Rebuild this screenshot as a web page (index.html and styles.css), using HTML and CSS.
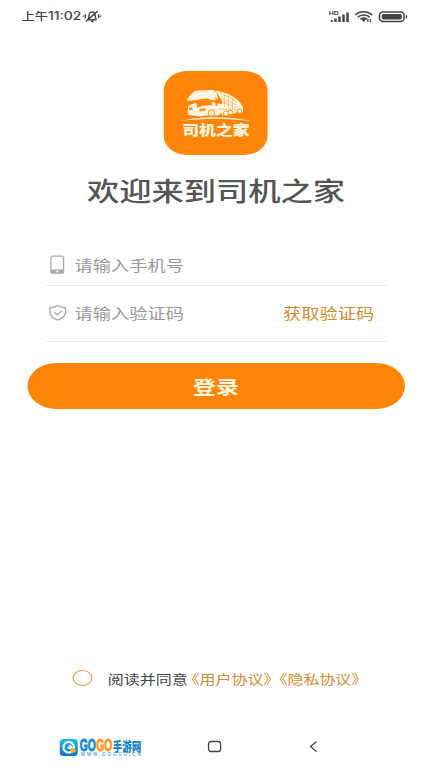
FILE: index.html
```html
<!DOCTYPE html>
<html lang="zh-CN">
<head>
<meta charset="utf-8">
<title>司机之家</title>
<link rel="stylesheet" href="styles.css">
</head>
<body>
<div class="screen">
  <header class="status">
    <span class="cn">上午</span><span class="clock">11:02</span>
    <svg class="mute" viewBox="0 0 20 14" preserveAspectRatio="none" fill="none" stroke="#444" stroke-width="1.5">
      <path d="M5 10.500h10M6 10c1.200-2 .4-4.500 1.500-6.500C8.600 1.700 12 1.700 13 4c.7 2 .2 4.500 1.500 6M9 12.400h2.500M3.500 12.500 16 1.200M3 4.500v4M1 5.800v1.500M17 4.500v4M19 5.800v1.500"/>
    </svg>
    <svg class="signals" viewBox="0 0 80 14" preserveAspectRatio="none">
      <text x="0" y="5.500" class="hd" textLength="10" lengthAdjust="spacingAndGlyphs">HD</text>
      <g fill="#444">
        <path d="M2 11h2v2H2zM5.500 9.500h2.500V13H5.500zM9.500 7.500h2.500V13H9.500zM13.500 5.500h2.500V13h-2.500zM17.500 3.500h2.500V13h-2.500z"/>
        <path d="M32.500 10.500 35 9l2.500 1.500L35 13z"/>
        <path d="M38.500 10h1.200v3h-1.200zM41 10h1.200v3H41z"/>
        <rect x="53" y="5" width="20" height="5.500" rx="1.500"/>
        <rect x="77" y="6" width="1.500" height="3.500" rx=".7"/>
      </g>
      <g fill="none" stroke="#444" stroke-width="1.500">
        <path d="M26.500 6c5-4.300 12-4.300 17 0M29 8.200c3.500-3 8.500-3 12 0M31.500 10.200c2-1.700 5-1.700 7 0"/>
        <rect x="50.700" y="2.900" width="24.600" height="9.600" rx="3.500"/>
      </g>
    </svg>
  </header>

  <main>
    <div class="logo">
      <svg class="truck" viewBox="0 0 76 36" preserveAspectRatio="none">
        <g fill="#fff5df">
          <path d="M9 14.500C12.500 9 15 5 21 4.500L36 4l3 2.500 1.500 6.500-4 1.500c-5-2-10-2.500-15-1L16 14.500z"/>
          <path d="m38 4.500 13 3.500 9 5.500 5.500 7V26l-3 1.500-2-2.500-4 3-3-1-4 3-5-1V15z"/>
          <path d="M11 19.500 18 17c6-2 13-2 19-.5l8 2v8l-5 3H27l-3 1-13-1.500-1-4z"/>
        </g>
        <g fill="#ff8508">
          <path d="m19 16 4-1.500 11 .7.500 3.800-9 .8-6 2z"/>
          <path d="m11.500 22 3-.8 1 2.300-4 .8zM22 23.500l6-1.500v2.300l-6 1.200zM38 10l1.500 4 .5 6-2-.5z"/>
        </g>
        <path fill="none" stroke="#ff8508" stroke-opacity=".7" stroke-width=".6" d="m43 8 9 3 7 5M44 12l15 7M45 16l14 6M47 8v13M51 9.500v13M55 12v11M41 23l20 1"/>
        <g fill="#fff5df" stroke="#ff8508" stroke-width=".9"><circle cx="34" cy="27" r="3.200"/><circle cx="48.500" cy="27.500" r="2.600"/><circle cx="53" cy="26.500" r="2.400"/><circle cx="62" cy="25.200" r="2.200"/></g>
        <path fill="#fff5df" d="M3 35C21 30.300 52 29.500 75 35.500 53 31.500 23 32 3 35"/>
      </svg>
      <span class="brand">司机之家</span>
    </div>
    <h1>欢迎来到司机之家</h1>

    <form>
      <div class="field phone">
        <svg class="icon" viewBox="0 0 18 20" preserveAspectRatio="none"><rect x="2.200" y="1.200" width="12.600" height="17" rx="1.600" fill="none" stroke="#aaa" stroke-width="1.300"/><path fill="#aaa" d="M2 14.500h13V18H2z"/><ellipse cx="8.500" cy="16.400" rx="1.200" ry=".9" fill="#fff"/></svg>
        <span class="hint">请输入手机号</span>
      </div>
      <div class="field code">
        <svg class="icon" viewBox="0 0 18 20" preserveAspectRatio="none" fill="none" stroke="#aaa" stroke-width="1.400"><path d="M9 2.700C6.500 4.300 4 4.700 1.200 4.700V9c0 4 3.500 6.500 7.800 8 4.300-1.500 7.800-4 7.800-8V4.700C14 4.700 11.500 4.300 9 2.700z"/><path d="m5.500 9 3 2.700 4.500-4"/></svg>
        <span class="hint">请输入验证码</span>
        <span class="get">获取验证码</span>
      </div>
      <div class="login">登录</div>
    </form>
  </main>

  <div class="agree">
    <span class="radio"></span>
    <span>阅读并同意</span><span class="link"><i class="open">《</i>用户协议<i class="close">》</i><i class="open">《</i>隐私协议<i class="close">》</i></span>
  </div>

  <footer class="nav">
    <svg class="mark" viewBox="0 0 84 22" preserveAspectRatio="none">
      <defs><linearGradient id="b" x2="0" y2="1"><stop stop-color="#25b6f4"/><stop offset="1" stop-color="#0878c4"/></linearGradient></defs>
      <rect x="1" y="3" width="18" height="17" rx="3.500" fill="url(#b)"/>
      <circle cx="10" cy="11.200" r="5.300" fill="none" stroke="#fff" stroke-width="2"/>
      <path d="M14 11.500H9.500a1.500 1.500 0 1 0 1-2" fill="none" stroke="#fff" stroke-width="1.500"/>
      <path d="m11 13 5-1 1 3.500-4 2z" fill="#ffac28"/>
      <text class="gogo" x="21" y="15.300" fill="#138bd0" stroke="#138bd0" textLength="16" lengthAdjust="spacingAndGlyphs">GO</text>
      <text class="gogo" x="37.500" y="15.300" fill="#ff9816" stroke="#ff9816" textLength="16" lengthAdjust="spacingAndGlyphs">GO</text>
      <text class="game" x="54" y="14.500" textLength="28.500" lengthAdjust="spacingAndGlyphs">手游网</text>
      <text class="url" x="22" y="20.500" textLength="60">WWW.GOGGO.CN</text>
    </svg>
    <svg class="home" viewBox="0 0 16 14" preserveAspectRatio="none"><rect x="2.300" y="1.500" width="12" height="10" rx="2.300" fill="none" stroke="#444" stroke-width="1.300"/></svg>
    <svg class="back" viewBox="0 0 12 14" preserveAspectRatio="none"><path d="M9 1.500 3 6.500 9 11.500" fill="none" stroke="#444" stroke-width="1.300"/></svg>
  </footer>
</div>
</body>
</html>
```
FILE: styles.css
```css
* { box-sizing: border-box; }
body {
  margin: 0;
  background: #fff;
  font-family: "Noto Sans CJK SC", sans-serif;
  overflow: hidden;
}
/* The layout is drawn at 4/5 width and widened to fill the window. */
.screen {
  width: 345.6px;
  height: 768px;
  display: flex;
  flex-direction: column;
  transform: scaleX(1.25);
  transform-origin: 0 0;
}
svg { display: block; flex: none; overflow: visible; }
span { white-space: nowrap; }

.status {
  height: 32px;
  padding-left: 17.2px;
  display: flex;
  align-items: center;
  color: #444;
  font-size: 10.6px;
  line-height: 32px;
}
.cn { font-weight: 500; }
.clock {
  width: 26px;
  font-family: Inter, sans-serif;
  font-size: 11.2px;
  font-weight: 500;
}
.mute { width: 15.2px; height: 13px; margin-left: 2px; }
.signals { width: 64px; height: 14px; margin-left: 181.5px; }
.hd { font: bold 6px "Liberation Sans", sans-serif; fill: #444; }

main { padding-top: 39px; }
.logo {
  width: 83.2px;
  height: 83.5px;
  margin-left: 131.2px;
  padding-top: 15px;
  border-radius: 19px;
  background: #ff8508;
  display: flex;
  flex-direction: column;
  align-items: center;
}
.truck { width: 60.8px; height: 36px; }
.brand {
  color: #fff5df;
  font-size: 13.5px;
  font-weight: 900;
  line-height: 15px;
}
h1 {
  margin: 16px 0 0;
  height: 38px;
  color: #555;
  font-size: 25.8px;
  font-weight: 500;
  line-height: 38px;
  text-align: center;
}
form { margin-top: 36.5px; }
.field {
  margin: 0 36.8px;
  padding: 0 9.4px 0 2.2px;
  display: flex;
  align-items: center;
  border-bottom: 1px solid #e8e8e8;
  color: #999;
  font-size: 14.6px;
}
.phone { height: 41px; padding-bottom: 1px; }
.code { height: 56px; padding-bottom: 2px; }
.icon { width: 14.4px; height: 20px; }
.hint { margin-left: 6.2px; }
.get { margin-left: auto; color: #d18b2c; }
.login {
  height: 46px;
  margin: 21px 21.9px 0;
  border-radius: 23px;
  background: #ff8508;
  color: #fff5df;
  font-size: 18.4px;
  font-weight: 600;
  line-height: 46px;
  text-align: center;
}

.agree {
  margin-top: auto;
  height: 30px;
  padding-left: 57.6px;
  display: flex;
  align-items: center;
  color: #444;
  font-size: 12.8px;
}
.radio {
  flex: none;
  width: 16px;
  height: 15.5px;
  margin-right: 12.6px;
  border: 1.3px solid #e5a34a;
  border-radius: 50%;
}
.link { color: #d18b2c; text-spacing-trim: space-all; }
.link i { font-style: normal; }
.open { margin-left: -.27em; }
.close { margin-right: -.23em; }

.nav {
  height: 42px;
  margin-top: 33px;
  padding-left: 46.8px;
  display: flex;
  align-items: center;
}
.mark { width: 67.2px; height: 22px; }
.home { width: 12.8px; height: 14px; margin-left: 51.4px; }
.back { width: 9.6px; height: 14px; margin-left: 67.4px; }
.gogo { font: bold 16.5px "Liberation Sans", sans-serif; stroke-width: .9; }
.game { font: 900 13px "Noto Sans CJK SC", sans-serif; fill: #1183c6; }
.url { font: bold 4.5px "Liberation Sans", sans-serif; fill: #5caee0; }
```
